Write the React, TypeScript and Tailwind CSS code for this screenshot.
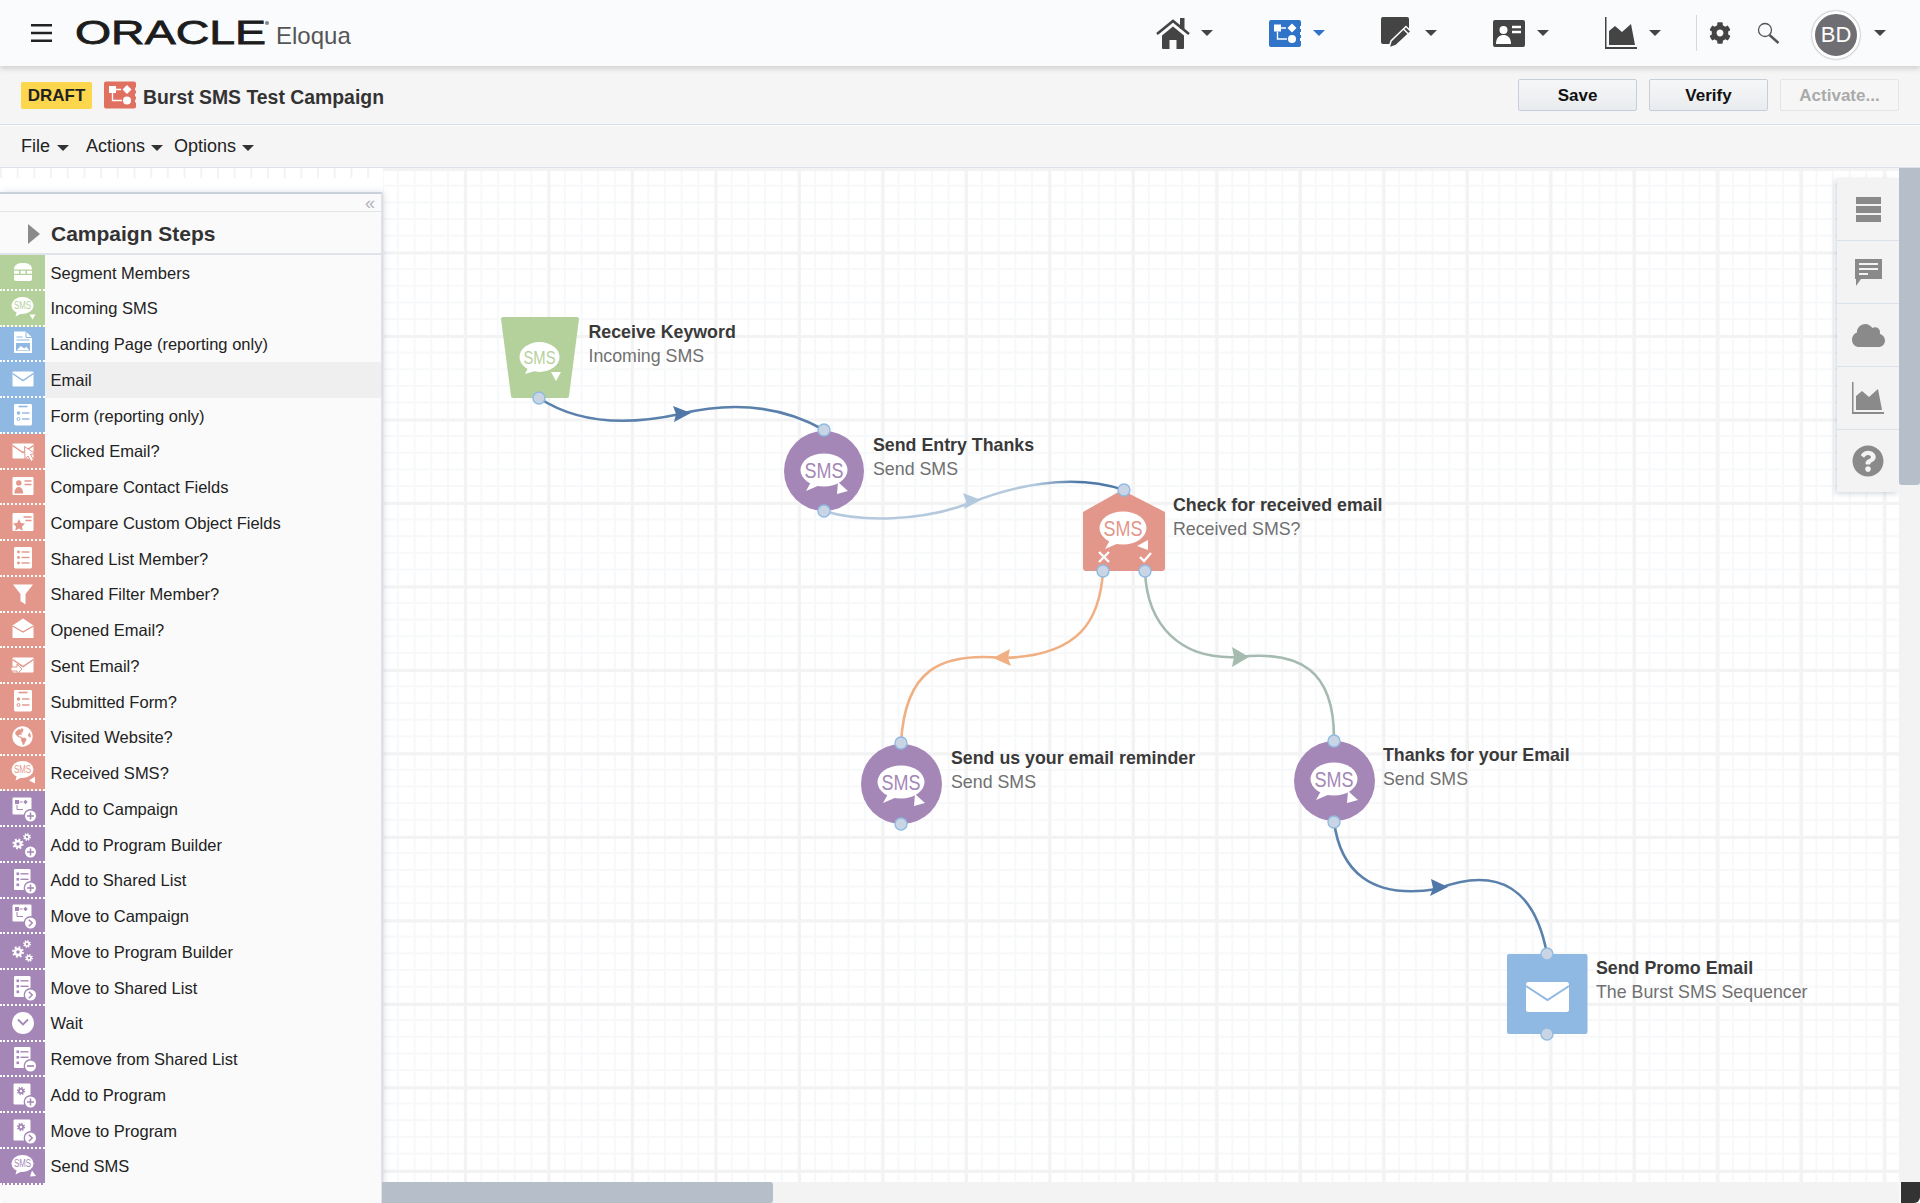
import type { ReactNode } from "react";
import { FaCloud, FaCog, FaGlobeAmericas, FaQuestionCircle } from "react-icons/fa";

const GREEN = "#b5d19b";
const BLUE = "#8fb8e2";
const RED = "#e3968a";
const PURPLE = "#a487b7";

type Step = { label: string; color: string; icon: string };

const steps: Step[] = [
  { label: "Segment Members", color: GREEN, icon: "segment" },
  { label: "Incoming SMS", color: GREEN, icon: "smsIn" },
  { label: "Landing Page (reporting only)", color: BLUE, icon: "landing" },
  { label: "Email", color: BLUE, icon: "email" },
  { label: "Form (reporting only)", color: BLUE, icon: "form" },
  { label: "Clicked Email?", color: RED, icon: "clicked" },
  { label: "Compare Contact Fields", color: RED, icon: "card" },
  { label: "Compare Custom Object Fields", color: RED, icon: "star" },
  { label: "Shared List Member?", color: RED, icon: "list" },
  { label: "Shared Filter Member?", color: RED, icon: "filter" },
  { label: "Opened Email?", color: RED, icon: "opened" },
  { label: "Sent Email?", color: RED, icon: "sent" },
  { label: "Submitted Form?", color: RED, icon: "form" },
  { label: "Visited Website?", color: RED, icon: "globe" },
  { label: "Received SMS?", color: RED, icon: "smsRecv" },
  { label: "Add to Campaign", color: PURPLE, icon: "campaignAdd" },
  { label: "Add to Program Builder", color: PURPLE, icon: "gearsAdd" },
  { label: "Add to Shared List", color: PURPLE, icon: "listAdd" },
  { label: "Move to Campaign", color: PURPLE, icon: "campaignMove" },
  { label: "Move to Program Builder", color: PURPLE, icon: "gearsMove" },
  { label: "Move to Shared List", color: PURPLE, icon: "listMove" },
  { label: "Wait", color: PURPLE, icon: "wait" },
  { label: "Remove from Shared List", color: PURPLE, icon: "listRemove" },
  { label: "Add to Program", color: PURPLE, icon: "programAdd" },
  { label: "Move to Program", color: PURPLE, icon: "programMove" },
  { label: "Send SMS", color: PURPLE, icon: "smsSend" },
];

function Gear({ x, y, r, fill, hole }: { x: number; y: number; r: number; fill: string; hole: string }) {
  return (
    <g>
      <circle cx={x} cy={y} r={r * 1.1} fill="none" stroke={fill} strokeWidth={r * 0.6} strokeDasharray={`${r * 0.43} ${r * 0.43}`} />
      <circle cx={x} cy={y} r={r} fill={fill} />
      <circle cx={x} cy={y} r={r * 0.42} fill={hole} />
    </g>
  );
}

function Badge({ c, kind }: { c: string; kind: "add" | "move" | "remove" }) {
  return (
    <g>
      <circle cx="22.5" cy="23" r="6.2" fill="#fff" stroke={c} strokeWidth="1.4" />
      {kind === "add" && <path d="M22.5 19.5v7M19 23h7" stroke={c} strokeWidth="1.5" />}
      {kind === "remove" && <path d="M19 23h7" stroke={c} strokeWidth="1.7" />}
      {kind === "move" && <path d="M20.8 19.8l3.4 3.2-3.4 3.2" fill="none" stroke={c} strokeWidth="1.5" />}
    </g>
  );
}

function MiniCampaign({ c }: { c: string }) {
  return (
    <g>
      <rect x="4.5" y="4.5" width="19" height="17" rx="1.2" fill="#fff" />
      <rect x="7" y="7" width="4" height="4" fill={c} />
      <path d="M11.5 9h3M9 12v4.500H15" stroke={c} strokeWidth="1" fill="none" />
      <path d="M17.5 6.800l2.200 2.200-2.200 2.200-2.200-2.200z" fill={c} />
    </g>
  );
}

function MiniList({ c }: { c: string }) {
  return (
    <g>
      <rect x="6" y="4" width="16.500" height="21" rx="1.200" fill="#fff" />
      <rect x="8.500" y="7.500" width="2.600" height="2.600" fill={c} />
      <path d="M12.500 8.800h8" stroke={c} strokeWidth="1.400" />
      <rect x="8.500" y="13" width="2.600" height="2.600" fill={c} />
      <path d="M12.500 14.300h8" stroke={c} strokeWidth="1.400" />
      <rect x="8.500" y="18.500" width="2.600" height="2.600" fill={c} />
    </g>
  );
}

function MiniProgram({ c }: { c: string }) {
  return (
    <g>
      <rect x="5.500" y="4.500" width="17" height="21" rx="1.200" fill="#fff" />
      <Gear x={13} y={12} r={3} fill={c} hole="#fff" />
    </g>
  );
}

function MiniEnvelope({ c }: { c: string }) {
  return (
    <g>
      <rect x="4.500" y="7.500" width="21" height="15" rx="1" fill="#fff" />
      <path d="M4.500 9.500L15 16.500 25.500 9.500" fill="none" stroke={c} strokeWidth="1.500" />
    </g>
  );
}

function MiniSms({ c }: { c: string }) {
  return (
    <g>
      <ellipse cx="14.500" cy="12.500" rx="11" ry="8.500" fill="#fff" />
      <path d="M9 18l-1.500 5.500 7-3.500z" fill="#fff" />
      <text x="14.500" y="16" textAnchor="middle" fontSize="10" fill={c} fontFamily="'Liberation Sans', sans-serif" textLength="17" lengthAdjust="spacingAndGlyphs">
        SMS
      </text>
    </g>
  );
}

function StepIcon({ name, c }: { name: string; c: string }) {
  let body: ReactNode = null;
  switch (name) {
    case "segment":
      body = (
        <g fill="#fff">
          <path d="M6 12.500C6 7.500 10 6 15 6s9 1.500 9 6.500z" />
          <path d="M6 13.800h5v3H6zM12.500 13.800h5v3h-5zM19 13.800h5v3h-5z" />
          <path d="M6 18h18v4a2 2 0 0 1-2 2H8a2 2 0 0 1-2-2z" />
        </g>
      );
      break;
    case "smsIn":
      body = (
        <g>
          <MiniSms c={c} />
          <path d="M21.500 21.500h6l-3 5z" fill="#fff" />
        </g>
      );
      break;
    case "smsRecv":
      body = (
        <g>
          <MiniSms c={c} />
          <path d="M21 23.500l6-4v7z" fill="#fff" />
        </g>
      );
      break;
    case "smsSend":
      body = (
        <g>
          <MiniSms c={c} />
          <path d="M24 19.500l4 5.500-6 .5z" fill="#fff" />
        </g>
      );
      break;
    case "landing":
      body = (
        <g>
          <path d="M6 3.500h12l6 6V25H6z" fill="#fff" />
          <path d="M18 3.500v6h6" fill="none" stroke={c} strokeWidth="1" />
          <path d="M8.500 9h6M8.500 12h13" stroke={c} strokeWidth="1.200" />
          <path d="M8 22.800V15h14v7.800z" fill={c} />
          <path d="M8.800 22.200l4-4.200 3.500 2.400 2-1.600 3 3.400z" fill="#fff" />
        </g>
      );
      break;
    case "email":
      body = <MiniEnvelope c={c} />;
      break;
    case "form":
      body = (
        <g>
          <rect x="6" y="4" width="18" height="21.500" rx="1.400" fill="#fff" />
          <path d="M10.500 6.500h9" stroke={c} strokeWidth="1.600" />
          <circle cx="10.500" cy="13" r="1.700" fill={c} />
          <path d="M14 13h7.500" stroke={c} strokeWidth="1.400" />
          <circle cx="10.500" cy="19" r="1.500" fill="none" stroke={c} strokeWidth="1" />
          <path d="M14 19h7.500" stroke={c} strokeWidth="1.400" />
        </g>
      );
      break;
    case "clicked":
      body = (
        <g>
          <MiniEnvelope c={c} />
          <path d="M16.500 10.500l10.500 7-4.500 1 3 5.500-2.500 1.500-3-5.500-3 3z" fill="#fff" stroke={c} strokeWidth="1" />
        </g>
      );
      break;
    case "card":
      body = (
        <g>
          <rect x="4.500" y="6" width="21" height="18" rx="1" fill="#fff" />
          <circle cx="10.800" cy="12" r="2.700" fill={c} />
          <path d="M6.500 22.500c0-5 2.500-6.500 4.300-6.500s4.300 1.500 4.300 6.500z" fill={c} />
          <path d="M16.500 10h7M16.500 13.500h7" stroke={c} strokeWidth="1.500" />
        </g>
      );
      break;
    case "star":
      body = (
        <g>
          <rect x="4.500" y="6" width="21" height="18" rx="1" fill="#fff" />
          <path d="M11 12l1.900 3.900 4.100.6-3 3 .8 4.200L11 21.500 7.200 23.700 8 19.500l-3-3 4.100-.6z" fill={c} />
          <path d="M15.500 10h8M17.500 13.500h6" stroke={c} strokeWidth="1.500" />
        </g>
      );
      break;
    case "list":
      body = (
        <g>
          <rect x="6" y="4" width="18" height="21.500" rx="1.400" fill="#fff" />
          <circle cx="10.500" cy="9" r="1.400" fill={c} />
          <path d="M13.500 9h8" stroke={c} strokeWidth="1.400" />
          <circle cx="10.500" cy="14.500" r="1.400" fill={c} />
          <path d="M13.500 14.500h8" stroke={c} strokeWidth="1.400" />
          <circle cx="10.500" cy="20" r="1.400" fill={c} />
          <path d="M13.500 20h8" stroke={c} strokeWidth="1.400" />
        </g>
      );
      break;
    case "filter":
      body = <path d="M5 5.500h20l-7.500 9.500v10.500l-5-3.500v-7z" fill="#fff" />;
      break;
    case "opened":
      body = (
        <g>
          <path d="M4.500 11.500L15 4.500l10.500 7V24h-21z" fill="#fff" />
          <path d="M4.500 12L15 18l10.500-6" fill="none" stroke={c} strokeWidth="1.400" />
        </g>
      );
      break;
    case "sent":
      body = (
        <g>
          <MiniEnvelope c={c} />
          <path d="M3 17h6v-3l5 5-5 5v-3H3z" fill="#fff" stroke={c} strokeWidth="1" />
        </g>
      );
      break;
    case "globe":
      return (
        <span className="flex h-[30px] w-[30px] items-center justify-center text-white">
          <FaGlobeAmericas size={21} />
        </span>
      );
    case "campaignAdd":
      body = (
        <g>
          <MiniCampaign c={c} />
          <Badge c={c} kind="add" />
        </g>
      );
      break;
    case "campaignMove":
      body = (
        <g>
          <MiniCampaign c={c} />
          <Badge c={c} kind="move" />
        </g>
      );
      break;
    case "gearsAdd":
      body = (
        <g>
          <Gear x={10} y={15} r={4} fill="#fff" hole={c} />
          <Gear x={19} y={8} r={2.800} fill="#fff" hole={c} />
          <Badge c={c} kind="add" />
        </g>
      );
      break;
    case "gearsMove":
      body = (
        <g>
          <Gear x={10} y={16} r={4.200} fill="#fff" hole={c} />
          <Gear x={19} y={8} r={2.800} fill="#fff" hole={c} />
          <Gear x={21} y={22} r={2.800} fill="#fff" hole={c} />
        </g>
      );
      break;
    case "listAdd":
      body = (
        <g>
          <MiniList c={c} />
          <Badge c={c} kind="add" />
        </g>
      );
      break;
    case "listMove":
      body = (
        <g>
          <MiniList c={c} />
          <Badge c={c} kind="move" />
        </g>
      );
      break;
    case "listRemove":
      body = (
        <g>
          <MiniList c={c} />
          <Badge c={c} kind="remove" />
        </g>
      );
      break;
    case "programAdd":
      body = (
        <g>
          <MiniProgram c={c} />
          <Badge c={c} kind="add" />
        </g>
      );
      break;
    case "programMove":
      body = (
        <g>
          <MiniProgram c={c} />
          <Badge c={c} kind="move" />
        </g>
      );
      break;
    case "wait":
      body = (
        <g>
          <circle cx="15" cy="15" r="11" fill="#fff" />
          <path d="M10 11.500l5 5 5-5" fill="none" stroke={c} strokeWidth="1.800" />
        </g>
      );
      break;
  }
  return (
    <svg width="30" height="30" viewBox="0 0 30 30">
      {body}
    </svg>
  );
}

function Caret({ className = "border-t-[#444]" }: { className?: string }) {
  return <span className={`inline-block h-0 w-0 border-x-[6px] border-t-[6px] border-x-transparent ${className}`} />;
}

function CampaignGlyph({ w, h, bg }: { w: number; h: number; bg: string }) {
  return (
    <svg width={w} height={h} viewBox="0 0 32 27">
      <path d="M2 0h28a2 2 0 0 1 2 2v4h-1v3h1v3h-1v3h1v3h-1v3h1v4a2 2 0 0 1-2 2H2a2 2 0 0 1-2-2V2a2 2 0 0 1 2-2z" fill={bg} />
      <rect x="5" y="4.500" width="7" height="7" fill="#fff" />
      <path d="M12 8h5M8.500 11.500V19H18" stroke="#fff" strokeWidth="1.400" fill="none" />
      <path d="M23 3.500l4.500 4.500-4.500 4.500-4.500-4.500z" fill="#fff" />
      <circle cx="23" cy="19" r="4" fill="#fff" />
    </svg>
  );
}

function NavIcon({ name }: { name: string }) {
  if (name === "home") {
    return (
      <svg width="34" height="32" viewBox="0 0 34 32" fill="#444">
        <rect x="24" y="1" width="4.500" height="11" />
        <path d="M1 17L17 4l16 13" fill="none" stroke="#444" strokeWidth="2.600" />
        <path d="M6 18.500L17 9.500l11 9V31a1 1 0 0 1-1 1h-6.500v-9h-7v9H7a1 1 0 0 1-1-1z" />
      </svg>
    );
  }
  if (name === "campaign") return <CampaignGlyph w={32} h={27} bg="#2f74c8" />;
  if (name === "asset") {
    return (
      <svg width="32" height="32" viewBox="0 0 32 32">
        <path d="M2 0h24a2 2 0 0 1 2 2v9L12 27H2a2 2 0 0 1-2-2V2a2 2 0 0 1 2-2z" fill="#444" />
        <path d="M25 9.500l5 5-15 14-7 2.500 2-7z" fill="#444" stroke="#fafbfc" strokeWidth="1.500" />
        <path d="M22.500 12l5 5" stroke="#fafbfc" strokeWidth="1.500" />
      </svg>
    );
  }
  if (name === "contact") {
    return (
      <svg width="32" height="27" viewBox="0 0 32 27">
        <rect width="32" height="27" rx="2" fill="#444" />
        <circle cx="10.500" cy="10" r="4" fill="#fff" />
        <path d="M3 24c0-7 4-9 7.500-9s7.500 2 7.500 9z" fill="#fff" />
        <path d="M19 7h9M19 12h9" stroke="#fff" strokeWidth="2.400" />
      </svg>
    );
  }
  return <ChartGlyph w={32} h={32} color="#444" />;
}

function ChartGlyph({ w, h, color }: { w: number; h: number; color: string }) {
  return (
    <svg width={w} height={h} viewBox="0 0 32 32" fill={color}>
      <path d="M0 0h1.500v30H32v2H0z" />
      <path d="M4 28V14l6-5 7 6 9-8 4 21z" />
    </svg>
  );
}

function NavItem({ name, caret, className }: { name: string; caret?: string; className: string }) {
  return (
    <div className={`flex items-center ${className}`}>
      <span className="flex w-[44px] justify-center">
        <NavIcon name={name} />
      </span>
      <span className="ml-[6px] flex">
        <Caret className={caret} />
      </span>
    </div>
  );
}

function Port({ x, y }: { x: number; y: number }) {
  return <circle cx={x} cy={y} r="6" fill="#c9d5e4" stroke="#8fbbe3" strokeWidth="1.400" />;
}

function BigSms({ x, y, fill, tail }: { x: number; y: number; fill: string; tail: "down" | "left" | "right" }) {
  return (
    <g>
      <ellipse cx={x} cy={y} rx="23.500" ry="16.500" fill="#fff" />
      <path d={`M${x - 13} ${y + 12}l-5 9 14-6z`} fill="#fff" />
      {tail === "right" && <path d={`M${x + 14} ${y + 12}l10 9-11 3z`} fill="#fff" />}
      {tail === "left" && <path d={`M${x + 25} ${y + 12}v10l-11-4z`} fill="#fff" />}
      <text x={x} y={y + 8} textAnchor="middle" fontSize="22" fill={fill} fontFamily="'Liberation Sans', sans-serif" textLength="39" lengthAdjust="spacingAndGlyphs">
        SMS
      </text>
    </g>
  );
}

function Label({ title, sub, className }: { title: string; sub: string; className: string }) {
  return (
    <div className={`absolute whitespace-nowrap leading-[24px] ${className}`}>
      <div className="text-[17.800px] font-bold text-[#3a3a3a]">{title}</div>
      <div className="text-[17.800px] text-[#707070]">{sub}</div>
    </div>
  );
}

function Diagram() {
  return (
    <svg className="absolute inset-0" width="1920" height="1035" viewBox="0 168 1920 1035">
      <defs>
        <linearGradient id="fade" gradientUnits="userSpaceOnUse" x1="824" y1="0" x2="1124" y2="0">
          <stop offset="0" stopColor="#b4c9de" />
          <stop offset="0.7" stopColor="#b4c9de" />
          <stop offset="0.85" stopColor="#4f78a8" />
        </linearGradient>
      </defs>

      {/* connectors */}
      <g fill="none" strokeWidth="2.600">
        <path d="M539 398C580 425 630 425 680 414 730 402 780 405 824 430" stroke="#5a80ab" />
        <path d="M824 511C860 522 920 522 970 503 1010 487 1070 472 1124 490" stroke="url(#fade)" />
        <path d="M1103 571C1100 620 1080 656 1003 658 940 652 905 670 901 743" stroke="#f0b083" />
        <path d="M1145 571C1147 625 1180 660 1238 657 1300 650 1335 670 1334 741" stroke="#a5bbb0" />
        <path d="M1334 821C1340 870 1370 900 1437 889 1500 865 1535 890 1547 954" stroke="#5a80ab" />
      </g>
      <path d="M691 413l-17 9 2-8-3-8z" fill="#4f78a8" />
      <path d="M981 500l-17 9 2-8-3-8z" fill="#b4c9de" />
      <path d="M993 658l17-9-2 9 3 8z" fill="#f0b083" />
      <path d="M1249 657l-17-10 2 10-2 10z" fill="#a5bbb0" />
      <path d="M1448 887l-17-8 2 9-3 8z" fill="#4f78a8" />

      {/* Receive Keyword */}
      <path d="M503 317h74a2 2 0 0 1 2 2l-10 77a2 2 0 0 1-2 2h-54a2 2 0 0 1-2-2l-10-77a2 2 0 0 1 2-2z" fill={GREEN} />
      <ellipse cx="539.500" cy="357" rx="20" ry="15" fill="#fff" />
      <path d="M528 368l-3 6 10-3z" fill="#fff" />
      <path d="M551 372h10l-5 9z" fill="#fff" />
      <text x="539.500" y="364" textAnchor="middle" fontSize="19" fill={GREEN} fontFamily="'Liberation Sans', sans-serif" textLength="32" lengthAdjust="spacingAndGlyphs">
        SMS
      </text>
      <Port x={539} y={398} />

      {/* Send Entry Thanks */}
      <ellipse cx="824" cy="471" rx="40" ry="40" fill={PURPLE} />
      <BigSms x={824} y={470} fill={PURPLE} tail="right" />
      <Port x={824} y={430} />
      <Port x={824} y={511} />

      {/* Check for received email */}
      <path d="M1122 490l43 22v56a3 3 0 0 1-3 3h-76a3 3 0 0 1-3-3v-56z" fill={RED} />
      <BigSms x={1123} y={528} fill={RED} tail="left" />
      <path d="M1099 552l10 10M1109 552l-10 10" stroke="#fff" strokeWidth="2.400" />
      <path d="M1140 557l4 4 7-8" fill="none" stroke="#fff" strokeWidth="2.400" />
      <Port x={1124} y={490} />
      <Port x={1103} y={571} />
      <Port x={1145} y={571} />

      {/* Send us your email reminder */}
      <ellipse cx="901.500" cy="784" rx="40.500" ry="40" fill={PURPLE} />
      <BigSms x={901} y={782} fill={PURPLE} tail="right" />
      <Port x={901} y={743} />
      <Port x={901} y={824} />

      {/* Thanks for your Email */}
      <ellipse cx="1334.500" cy="781" rx="40.500" ry="40" fill={PURPLE} />
      <BigSms x={1334} y={779} fill={PURPLE} tail="right" />
      <Port x={1334} y={741} />
      <Port x={1334} y={822} />

      {/* Send Promo Email */}
      <rect x="1507" y="954" width="80.500" height="80" rx="2" fill={BLUE} />
      <rect x="1526" y="982" width="43" height="30" rx="2.500" fill="#fff" />
      <path d="M1526 986l21.500 14 21.500-14" fill="none" stroke={BLUE} strokeWidth="2" />
      <Port x={1547} y={954} />
      <Port x={1547} y={1034} />
    </svg>
  );
}

export default function App() {
  return (
    <div className="flex h-[1203px] w-[1920px] flex-col overflow-hidden bg-white font-['Liberation_Sans',sans-serif] text-[#222]">
      {/* top bar */}
      <header className="relative z-10 flex h-[66px] shrink-0 items-center bg-[#fafbfc] shadow-[0_3px_5px_rgba(0,0,0,0.14)]">
        <svg className="ml-[31px]" width="21" height="18" viewBox="0 0 21 18">
          <path d="M0 1.200h21M0 9h21M0 16.800h21" stroke="#222" strokeWidth="2.400" />
        </svg>
        <svg className="ml-[23px] overflow-visible" width="196" height="36" viewBox="0 0 196 36">
          <text x="0" y="29" fontSize="34" fill="#1c1c1c" stroke="#1c1c1c" strokeWidth="0.800" fontFamily="'Liberation Sans', sans-serif" textLength="191" lengthAdjust="spacingAndGlyphs">
            ORACLE
          </text>
          <circle cx="192" cy="8" r="2" fill="#888" />
        </svg>
        <span className="ml-[5px] mt-[6px] text-[24px] text-[#555]">Eloqua</span>

        <div className="ml-auto flex items-center pr-[34px]">
          <NavItem name="home" className="w-[112px]" />
          <NavItem name="campaign" caret="border-t-[#2f74c8]" className="w-[112px]" />
          <NavItem name="asset" className="w-[112px]" />
          <NavItem name="contact" className="w-[112px]" />
          <NavItem name="chart" className="w-[97px]" />
          <span className="h-[36px] w-px bg-[#d5d8dc]" />
          <FaCog className="ml-[12px] text-[#444]" size={22} />
          <svg className="ml-[26px]" width="23" height="22" viewBox="0 0 23 22" fill="none" stroke="#555">
            <circle cx="8" cy="8" r="6.500" strokeWidth="1.300" />
            <path d="M12.500 13l9 8" strokeWidth="2.400" />
          </svg>
          <span className="ml-[32px] mt-[3px] flex h-[48px] w-[48px] items-center justify-center rounded-full border-[3px] border-white bg-[#6e6e73] text-[22px] text-white shadow-[0_0_2px_rgba(0,0,0,0.5)]">
            BD
          </span>
          <span className="ml-[14px] flex">
            <Caret />
          </span>
        </div>
      </header>

      {/* campaign title bar */}
      <div className="flex h-[59px] shrink-0 items-center border-b border-[#d8dee6] bg-[#f5f5f5] pl-[21px] pr-[21px]">
        <span className="mt-[1px] flex h-[27px] w-[71px] items-center justify-center rounded-[2px] bg-[#fcd64d] text-[17px] font-bold text-[#222]">DRAFT</span>
        <span className="ml-[12px] flex">
          <CampaignGlyph w={32} h={28} bg="#e0705f" />
        </span>
        <span className="ml-[7px] mt-[5px] text-[19.400px] font-bold text-[#333]">Burst SMS Test Campaign</span>
        <div className="ml-auto flex gap-[12px]">
          <button className="h-[32px] w-[119px] rounded-[2px] border border-[#c6cfd9] bg-gradient-to-b from-[#f6f7f8] to-[#e9ebee] pt-[1px] text-[17px] font-bold text-[#111]">Save</button>
          <button className="h-[32px] w-[119px] rounded-[2px] border border-[#c6cfd9] bg-gradient-to-b from-[#f6f7f8] to-[#e9ebee] pt-[1px] text-[17px] font-bold text-[#111]">Verify</button>
          <button className="h-[32px] w-[119px] rounded-[2px] border border-[#e3e5e8] bg-[#f6f6f6] pt-[1px] text-[17px] font-bold text-[#aaa]">Activate...</button>
        </div>
      </div>

      {/* menu bar */}
      <nav className="flex h-[43px] shrink-0 items-center border-b border-t border-b-[#dde2e8] border-t-white bg-[#f5f5f5] pl-[21px] text-[18px] text-[#222]">
        <span>File</span>
        <span className="ml-[7px] flex pt-[2px]">
          <Caret className="border-t-[#333]" />
        </span>
        <span className="ml-[17px]">Actions</span>
        <span className="ml-[6px] flex pt-[2px]">
          <Caret className="border-t-[#333]" />
        </span>
        <span className="ml-[11px]">Options</span>
        <span className="ml-[6px] flex pt-[2px]">
          <Caret className="border-t-[#333]" />
        </span>
      </nav>

      {/* canvas */}
      <main className="relative flex-1 overflow-hidden bg-white">
        <div className="absolute inset-0 bg-[linear-gradient(to_right,#f3f3f4_3px,transparent_3px),linear-gradient(to_bottom,#f3f3f4_3px,transparent_3px),linear-gradient(to_right,#f7f8fa_2px,transparent_2px),linear-gradient(to_bottom,#f7f8fa_2px,transparent_2px)] bg-[length:83.500px_83.500px,83.500px_83.500px,16.700px_16.700px,16.700px_16.700px] bg-[position:46.500px_0,0_0,46.500px_0,0_0]" />

        <Diagram />

        <Label title="Receive Keyword" sub="Incoming SMS" className="left-[588.500px] top-[152px]" />
        <Label title="Send Entry Thanks" sub="Send SMS" className="left-[873px] top-[265px]" />
        <Label title="Check for received email" sub="Received SMS?" className="left-[1173px] top-[325px]" />
        <Label title="Send us your email reminder" sub="Send SMS" className="left-[951px] top-[578px]" />
        <Label title="Thanks for your Email" sub="Send SMS" className="left-[1383px] top-[575px]" />
        <Label title="Send Promo Email" sub="The Burst SMS Sequencer" className="left-[1596px] top-[788px]" />

        {/* strip above the steps panel */}
        <div className="absolute left-0 top-0 h-[24px] w-[383px] bg-white">
          <div className="h-[10px] bg-[linear-gradient(to_right,#f3f3f4_2px,transparent_2px)] bg-[length:16.700px_10px]" />
        </div>

        {/* steps panel */}
        <aside className="absolute bottom-0 left-0 top-[24px] w-[382px] rounded-bl-xl border-r border-t-2 border-r-[#dfe3e8] border-t-[#c9d1da] bg-[#fafafa] shadow-[2px_0_6px_rgba(90,110,140,0.22)]">
          <div className="flex h-[18px] items-center justify-end border-b border-[#e2e5e9] pr-[6px] text-[18px] leading-none text-[#b0b4b9]">«</div>
          <div className="flex h-[43px] items-center border-b-2 border-[#e0e4ea] pt-[2px]">
            <span className="ml-[28px] h-0 w-0 border-y-[10px] border-l-[12px] border-y-transparent border-l-[#8a8a8a]" />
            <span className="ml-[11px] text-[21px] font-bold text-[#333]">Campaign Steps</span>
          </div>
          {steps.map((s) => (
            <div key={s.label} className={`flex h-[35.750px] items-center ${s.label === "Email" ? "bg-[#efefef]" : ""}`}>
              <span className={`flex h-full w-[45px] shrink-0 items-center justify-center border-b-2 border-dotted border-white ${s.color === GREEN ? "bg-[#b5d19b]" : s.color === BLUE ? "bg-[#8fb8e2]" : s.color === RED ? "bg-[#e3968a]" : "bg-[#a487b7]"}`}>
                <StepIcon name={s.icon} c={s.color} />
              </span>
              <span className="ml-[5.500px] text-[16.500px] text-[#222]">{s.label}</span>
            </div>
          ))}
        </aside>

        {/* right tool panel */}
        <div className="absolute left-[1837px] top-[10px] flex h-[314px] w-[62px] flex-col divide-y divide-[#dbe1e8] bg-[#f3f3f3] shadow-[-2px_2px_5px_rgba(90,110,140,0.25)]">
          <div className="flex flex-1 items-center justify-center">
            <svg width="25" height="25" viewBox="0 0 25 25" fill="#8a8a8a">
              <rect width="25" height="7" />
              <rect y="9" width="25" height="7" />
              <rect y="18" width="25" height="7" />
            </svg>
          </div>
          <div className="flex flex-1 items-center justify-center">
            <svg width="27" height="27" viewBox="0 0 27 27">
              <path d="M0 0h27v20H6l-5 7v-7H0z" fill="#8a8a8a" />
              <path d="M4 5h19M4 10h19M4 15h9" stroke="#f3f3f3" strokeWidth="1.800" />
            </svg>
          </div>
          <div className="flex flex-1 items-center justify-center text-[#8a8a8a]">
            <FaCloud size={33} />
          </div>
          <div className="flex flex-1 items-center justify-center">
            <ChartGlyph w={32} h={32} color="#8a8a8a" />
          </div>
          <div className="flex flex-1 items-center justify-center text-[#8a8a8a]">
            <FaQuestionCircle size={32} />
          </div>
        </div>

        {/* scrollbars */}
        <div className="absolute bottom-[21px] right-0 top-0 w-[21px] bg-[#f3f3f3]">
          <div className="h-[317px] rounded-b-[3px] bg-[#b5bec9]" />
        </div>
        <div className="absolute bottom-0 left-[382px] right-[21px] h-[21px] bg-[#f3f3f3]">
          <div className="h-full w-[391px] rounded-r-[3px] bg-[#b5bec9]" />
        </div>
        <div className="absolute bottom-0 right-0 h-[21px] w-[19px] rounded-br-[6px] bg-[#333]" />
      </main>
    </div>
  );
}
